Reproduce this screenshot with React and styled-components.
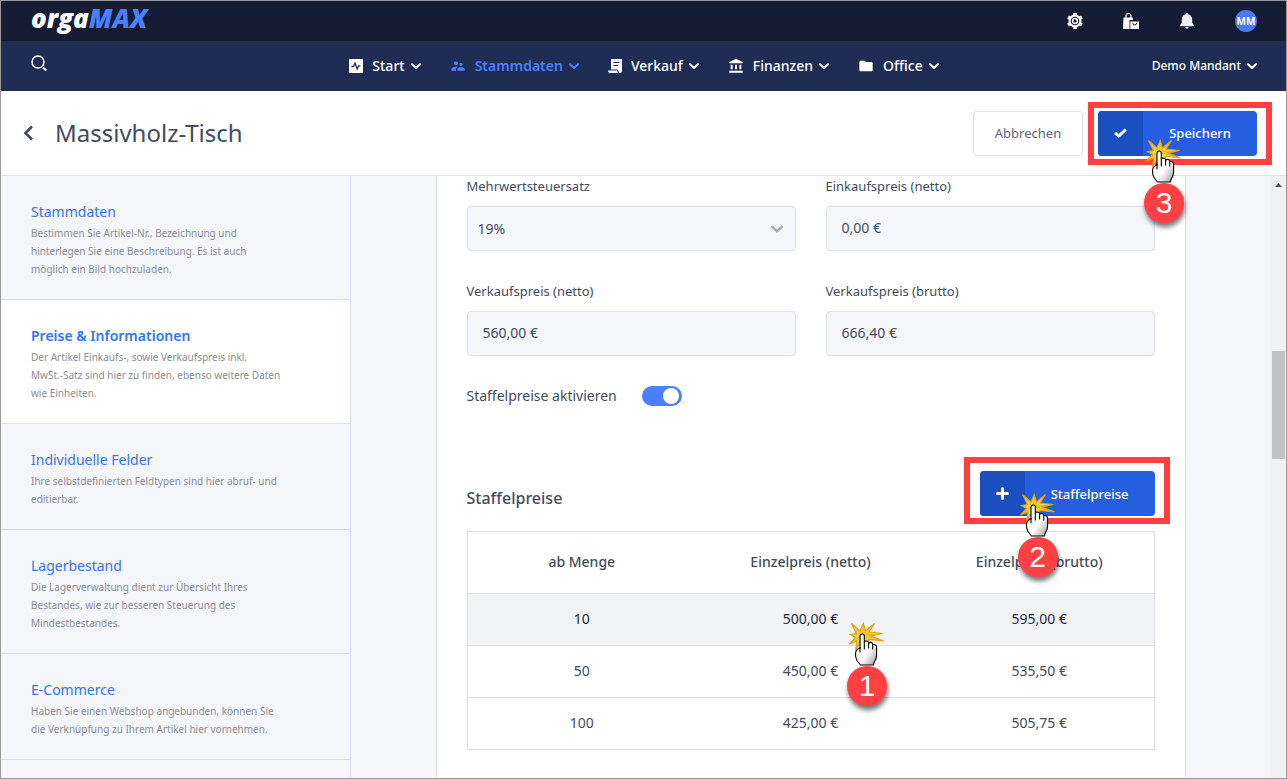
import React from "react";
import styled, { createGlobalStyle, css } from "styled-components";
import { MdAccountBalance, MdFolder, MdSupervisorAccount } from "react-icons/md";

const color = {
  top: "#151d35",
  nav: "#1f2d54",
  surface: "#f5f6fa",
  line: "#dcdfea",
  text: "#434c5e",
  muted: "#8a8d93",
  link: "#3573f0",
  accent: "#4a80ff",
  primary: "#265ee0",
  primaryDark: "#1b4fc0",
  mark: "#ff4043",
};

const GlobalStyle = createGlobalStyle`
  *, *::before, *::after { box-sizing: border-box; }
  body {
    margin: 0;
    font-family: "Noto Sans", "Open Sans", sans-serif;
    font-size: 14px;
    line-height: 20px;
    color: ${color.text};
  }
  button, input, select { font: inherit; color: inherit; margin: 0; }
  a { color: inherit; text-decoration: none; }
  svg { display: block; flex: none; }
`;

const Page = styled.div`
  display: flex;
  flex-direction: column;
  height: 100vh;
  border: 1px solid #999;
  overflow: hidden;
  background: #fff;
`;

const TopBar = styled.div`
  flex: none;
  display: flex;
  align-items: center;
  justify-content: space-between;
  height: 40px;
  padding: 0 29px 0 30px;
  background: ${color.top};
  color: #fff;
`;

const Logo = styled.a`
  padding-bottom: 6px;
  font-family: "Open Sans", sans-serif;
  font-size: 26px;
  font-weight: 800;
  font-style: italic;
  line-height: 34px;
  b {
    font-weight: 800;
    color: ${color.accent};
  }
`;

const TopActions = styled.div`
  display: flex;
  align-items: center;
  gap: 40px;
`;

const IconButton = styled.button`
  display: flex;
  padding: 0;
  border: 0;
  background: none;
  color: inherit;
`;

const Avatar = styled.button`
  width: 22px;
  height: 22px;
  padding: 0;
  border: 0;
  border-radius: 50%;
  background: #4a7bf5;
  color: #fff;
  font-size: 10px;
  font-weight: 700;
  line-height: 22px;
`;

const NavBar = styled.nav`
  flex: none;
  display: grid;
  grid-template-columns: 1fr auto 1fr;
  align-items: center;
  height: 50px;
  padding: 0 29px 0 30px;
  background: ${color.nav};
  color: #fff;
`;

const SearchButton = styled(IconButton)`
  padding-bottom: 6px;
`;

const NavList = styled.div`
  display: flex;
  gap: 29px;
`;

const NavLink = styled.a`
  display: flex;
  align-items: center;
  gap: 6px;
  font-weight: ${(p) => (p.$active ? 600 : 500)};
  color: ${(p) => (p.$active ? color.accent : "#fff")};
  > svg:first-child {
    margin-right: 3px;
  }
`;

const ClientMenu = styled.button`
  justify-self: end;
  display: flex;
  align-items: center;
  gap: 6px;
  padding: 0;
  border: 0;
  background: none;
  color: #fff;
  font-size: 12px;
  font-weight: 500;
`;

const PageHeader = styled.header`
  flex: none;
  position: relative;
  z-index: 2;
  display: flex;
  align-items: center;
  height: 85px;
  padding: 0 29px 0 21px;
  border-bottom: 1px solid ${color.line};
  background: #fff;
`;

const Title = styled.h1`
  flex: 1;
  margin: 0 0 0 21px;
  font-size: 24px;
  font-weight: 400;
  line-height: 32px;
`;

const ButtonRow = styled.div`
  display: flex;
  gap: 15px;
`;

const PlainButton = styled.button`
  height: 45px;
  padding: 0 21px;
  border: 1px solid ${color.line};
  border-radius: 4px;
  background: #fff;
  font-size: 13px;
  color: #5c6474;
`;

const PrimaryButton = styled.button`
  display: flex;
  align-items: center;
  height: 45px;
  padding: 0;
  border: 0;
  border-radius: 4px;
  overflow: hidden;
  background: ${color.primary};
  color: #fff;
  font-size: 13px;
  font-weight: 500;
`;

const ButtonIcon = styled.span`
  display: grid;
  place-items: center;
  width: 45px;
  height: 45px;
  background: ${color.primaryDark};
`;

const ButtonText = styled.span`
  padding: 0 26px;
`;

const Highlighted = styled.div`
  position: relative;
  &::after {
    content: "";
    position: absolute;
    inset: ${(p) => p.$inset};
    border: 6px solid ${color.mark};
    pointer-events: none;
  }
`;

const Body = styled.div`
  flex: 1;
  min-height: 0;
  display: flex;
  background: ${color.surface};
`;

const Sidebar = styled.aside`
  flex: none;
  width: 350px;
  border-right: 1px solid ${color.line};
  overflow: hidden;
`;

const SideItem = styled.a`
  display: block;
  padding: 26px 60px 21px 30px;
  border-bottom: 1px solid ${color.line};
  ${(p) =>
    p.$active &&
    css`
      background: #fff;
    `}
`;

const SideTitle = styled.span`
  display: block;
  margin-bottom: 2px;
  font-weight: ${(p) => (p.$active ? 600 : 400)};
  color: ${color.link};
`;

const SideText = styled.span`
  display: block;
  font-size: 10px;
  line-height: 18px;
  color: ${color.muted};
`;

const Content = styled.main`
  flex: 1;
  min-width: 0;
  display: flex;
  justify-content: center;
  overflow: hidden;
`;

const Panel = styled.section`
  width: 100%;
  max-width: 750px;
  min-height: 100%;
  padding: 0 30px 30px;
  border: solid ${color.line};
  border-width: 0 1px;
  background: #fff;
`;

const FieldGrid = styled.div`
  display: grid;
  grid-template-columns: 1fr 1fr;
  gap: 30px;
`;

const Field = styled.div`
  display: flex;
  flex-direction: column;
  gap: 10px;
`;

const FieldLabel = styled.label`
  font-size: ${(p) => (p.$large ? 14 : 13)}px;
`;

const control = css`
  width: 100%;
  height: 45px;
  border: 1px solid ${color.line};
  border-radius: 4px;
  background: ${color.surface};
`;

const TextInput = styled.input`
  ${control}
  padding: 0 15px 2px;
`;

const SelectBox = styled.div`
  display: grid;
  align-items: center;
  > * {
    grid-area: 1 / 1;
  }
  svg {
    justify-self: end;
    margin-right: 13px;
    color: #aaa;
    pointer-events: none;
  }
`;

const Select = styled.select`
  ${control}
  appearance: none;
  padding: 0 10px;
`;

const ToggleRow = styled.div`
  display: flex;
  align-items: center;
  gap: 25px;
  margin-top: 30px;
`;

const Toggle = styled.input`
  appearance: none;
  display: flex;
  align-items: center;
  width: 40px;
  height: 20px;
  padding: 0 3px;
  border-radius: 10px;
  background: #c4c8d4;
  &:checked {
    justify-content: flex-end;
    background: ${color.accent};
  }
  &::before {
    content: "";
    width: 16px;
    height: 16px;
    border-radius: 50%;
    background: #fff;
  }
`;

const SectionHead = styled.div`
  display: flex;
  justify-content: space-between;
  align-items: center;
  margin: 65px 0 15px;
`;

const SectionTitle = styled.h2`
  margin: 0;
  padding-top: 8px;
  font-size: 16px;
  font-weight: 500;
`;

const PriceTable = styled.table`
  width: 100%;
  table-layout: fixed;
  border-collapse: collapse;
  border: 1px solid ${color.line};
  text-align: center;
`;

const HeadCell = styled.th`
  height: 62px;
  padding: 0 0 2px;
  font-weight: 500;
`;

const Row = styled.tr`
  height: 52px;
  border-top: 1px solid ${color.line};
  ${(p) =>
    p.$hover &&
    css`
      background: #f1f3f5;
      color: #1f2745;
    `}
`;

const Cell = styled.td`
  position: relative;
  padding: 0 0 2px;
`;

const ScrollTrack = styled.div`
  flex: none;
  display: flex;
  flex-direction: column;
  align-items: center;
  width: 16px;
  padding-top: 7px;
  background: #f1f1f1;
`;

const ScrollThumb = styled.div`
  width: 13px;
  height: 108px;
  margin-top: 164px;
  background: #c1c1c1;
`;

const Marker = styled.span`
  position: absolute;
  z-index: 3;
  left: ${(p) => p.$left}px;
  top: ${(p) => p.$top}px;
  display: flex;
  flex-direction: column;
  align-items: center;
  width: 40px;
  pointer-events: none;
`;

const MarkerBadge = styled.span`
  width: 40px;
  height: 40px;
  border-radius: 50%;
  background: ${color.mark};
  box-shadow: 1px 4px 5px rgba(0, 0, 0, 0.55);
  color: #fff;
  font: 400 30px/40px "Liberation Sans", Arial, sans-serif;
  text-align: center;
`;

function Chevron({ size = 10, width = 2 }) {
  return (
    <svg width={size} height={size} viewBox="0 0 10 10" fill="none" stroke="currentColor" strokeWidth={width} strokeLinecap="round" strokeLinejoin="round">
      <path d="M1 3.2 5 7l4-3.800" />
    </svg>
  );
}

function ClickMarker({ number, left, top }) {
  return (
    <Marker $left={left} $top={top}>
      <svg width="40" height="45" viewBox="-20 -14 40 45" overflow="visible">
        <defs>
          <linearGradient id={`hand-${number}`} x1="0.3" y1="0.3" x2="1" y2="1">
            <stop offset="0.4" stopColor="#fff" />
            <stop offset="1" stopColor="#999" />
          </linearGradient>
        </defs>
        <g transform="translate(-5 0)">
          <path
            d="M-10.500-11.500-2-4 1.300-11.500 3.500-4 12.500-11.500 7-3 20.500-1.500 9 1 21.500 6 7 4.500 4 8-1 6-6.500 15.500-5 6-12.500 9-6.500 2.500-11.500-.500-5.500-1.500Z"
            fill="#f5cf45"
            stroke="#dfa20c"
            strokeWidth="1.200"
          />
          <path d="M-7-8 0 0 1.500-8M0 0 9-8M0 0 16-.500M0 0 17 5M0 0-9 6.500" fill="none" stroke="#e6ad17" strokeWidth=".8" />
          <path
            d="M-2 1.500Q-2-1 .2-1T2.300 1.500V7Q3 5.500 5 6.200T7 8Q9 6.500 10.500 8.500L10.700 9.500Q14.800 9 14.600 13V20Q14.600 24 12.500 26.500L11.300 30H-1.500L-5 25.500Q-6.800 22-6.500 18.500-6.200 14.500-2 13Z"
            fill={`url(#hand-${number})`}
            stroke="#000"
            strokeWidth="1.100"
            strokeLinejoin="round"
          />
          <path d="M-2 12V17.500M2.300 7V14.500M6.600 8V13.500M10.700 9.500V14.500" fill="none" stroke="#000" strokeWidth="1.100" />
        </g>
      </svg>
      <MarkerBadge>{number}</MarkerBadge>
    </Marker>
  );
}

function StartIcon() {
  return (
    <svg width="14" height="14" viewBox="0 0 14 14">
      <rect width="14" height="14" rx="1" fill="currentColor" />
      <path d="M2.500 7.500H4.500L6 4 8.200 10 9.500 6.800H11.500" fill="none" stroke={color.nav} strokeWidth="1.300" />
    </svg>
  );
}

function ReceiptIcon() {
  return (
    <svg width="14" height="14" viewBox="0 0 14 14">
      <path d="M3 0H14V11.500Q14 14 11.500 14L9.500 10.500H3Z" fill="currentColor" />
      <path d="M0 11.500H9L10 14H2Q0 14 0 11.500Z" fill="currentColor" />
      <path d="M5.500 3.500H11.500M5.500 6.500H10" stroke={color.nav} strokeWidth="1.200" />
    </svg>
  );
}

function GearIcon() {
  return (
    <svg width="16" height="16" viewBox="0 0 16 16" fill="none" stroke="#fff">
      <circle cx="8" cy="8" r="5.400" strokeWidth="2.200" />
      <path
        d="M8 2.500V0M8 13.500V16M3.240 5.250 1.070 4M12.760 10.750 14.930 12M3.240 10.750 1.070 12M12.760 5.250 14.930 4"
        strokeWidth="3.600"
      />
      <circle cx="8" cy="8" r="2.400" strokeWidth="1.500" />
    </svg>
  );
}

function BagIcon() {
  return (
    <svg width="16" height="16" viewBox="0 0 16 16">
      <path d="M3 5V3a2.500 2.500 0 0 1 5 0v2" fill="none" stroke="currentColor" strokeWidth="1.200" />
      <path d="M.5 4.500H9.500L10 7H6.500V16H0Z" fill="currentColor" />
      <path d="M7.300 8.500H16V16H7.300Z" fill="currentColor" />
      <path d="M9.800 10a1.900 1.900 0 0 0 3.800 0" fill="none" stroke={color.top} strokeWidth="1" />
    </svg>
  );
}

function BellIcon() {
  return (
    <svg width="16" height="16" viewBox="0 0 16 16" fill="#eef0f6">
      <path d="M8 0c.8 0 1.200.5 1.200 1.300C11.700 1.900 13.200 3.800 13.200 6.300V10l1.800 2v1.200H1V12l1.800-2V6.300c0-2.500 1.500-4.400 4-5C6.800.5 7.200 0 8 0ZM6.300 14h3.400a1.700 1.700 0 0 1-3.400 0Z" />
    </svg>
  );
}

function SearchIcon() {
  return (
    <svg width="16" height="16" viewBox="0 0 16 16" fill="none" stroke="#fff" strokeWidth="1.500">
      <circle cx="7" cy="7" r="6" />
      <path d="m12 12.500 3.300 3" strokeWidth="2" />
    </svg>
  );
}

const navItems = [
  { label: "Start", icon: <StartIcon /> },
  { label: "Stammdaten", icon: <MdSupervisorAccount size={16} />, active: true },
  { label: "Verkauf", icon: <ReceiptIcon /> },
  { label: "Finanzen", icon: <MdAccountBalance size={16} /> },
  { label: "Office", icon: <MdFolder size={16} /> },
];

const sections = [
  {
    title: "Stammdaten",
    lines: ["Bestimmen Sie Artikel-Nr., Bezeichnung und", "hinterlegen Sie eine Beschreibung. Es ist auch", "möglich ein Bild hochzuladen."],
  },
  {
    title: "Preise & Informationen",
    active: true,
    lines: ["Der Artikel Einkaufs-, sowie Verkaufspreis inkl.", "MwSt.-Satz sind hier zu finden, ebenso weitere Daten", "wie Einheiten."],
  },
  { title: "Individuelle Felder", lines: ["Ihre selbstdefinierten Feldtypen sind hier abruf- und", "editierbar."] },
  {
    title: "Lagerbestand",
    lines: ["Die Lagerverwaltung dient zur Übersicht Ihres", "Bestandes, wie zur besseren Steuerung des", "Mindestbestandes."],
  },
  { title: "E-Commerce", lines: ["Haben Sie einen Webshop angebunden, können Sie", "die Verknüpfung zu Ihrem Artikel hier vornehmen."] },
];

const prices = [
  ["10", "500,00 €", "595,00 €"],
  ["50", "450,00 €", "535,50 €"],
  ["100", "425,00 €", "505,75 €"],
];

function PriceField({ id, label, value }) {
  return (
    <Field>
      <FieldLabel htmlFor={id}>{label}</FieldLabel>
      <TextInput id={id} defaultValue={value} />
    </Field>
  );
}

export default function App() {
  return (
    <Page>
      <GlobalStyle />
      <TopBar>
        <Logo href="#">
          orga<b>MAX</b>
        </Logo>
        <TopActions>
          <IconButton aria-label="Einstellungen">
            <GearIcon />
          </IconButton>
          <IconButton aria-label="Shop">
            <BagIcon />
          </IconButton>
          <IconButton aria-label="Benachrichtigungen">
            <BellIcon />
          </IconButton>
          <Avatar>MM</Avatar>
        </TopActions>
      </TopBar>
      <NavBar>
        <SearchButton aria-label="Suche">
          <SearchIcon />
        </SearchButton>
        <NavList>
          {navItems.map((item) => (
            <NavLink key={item.label} href="#" $active={item.active}>
              {item.icon}
              {item.label}
              <Chevron />
            </NavLink>
          ))}
        </NavList>
        <ClientMenu>
          Demo Mandant
          <Chevron />
        </ClientMenu>
      </NavBar>
      <PageHeader>
        <IconButton aria-label="Zurück">
          <svg width="12" height="16" viewBox="0 0 12 16" fill="none" stroke={color.text} strokeWidth="2.600">
            <path d="M10 1.500 3.500 8l6.500 6.500" />
          </svg>
        </IconButton>
        <Title>Massivholz-Tisch</Title>
        <ButtonRow>
          <PlainButton>Abbrechen</PlainButton>
          <Highlighted $inset="-9px -15px -9px -10px">
            <PrimaryButton>
              <ButtonIcon>
                <svg width="13" height="10" viewBox="0 0 13 10" fill="none" stroke="#fff" strokeWidth="3">
                  <path d="m1.200 4.800 3.600 3.200L11.800 1.500" />
                </svg>
              </ButtonIcon>
              <ButtonText>Speichern</ButtonText>
            </PrimaryButton>
            <ClickMarker number={3} left={46} top={27} />
          </Highlighted>
        </ButtonRow>
      </PageHeader>
      <Body>
        <Sidebar>
          {sections.map((s) => (
            <SideItem key={s.title} href="#" $active={s.active}>
              <SideTitle $active={s.active}>{s.title}</SideTitle>
              {s.lines.map((line) => (
                <SideText key={line}>{line}</SideText>
              ))}
            </SideItem>
          ))}
        </Sidebar>
        <Content>
          <Panel>
            <FieldGrid>
              <Field>
                <FieldLabel htmlFor="vat">Mehrwertsteuersatz</FieldLabel>
                <SelectBox>
                  <Select id="vat" defaultValue="19%">
                    <option>19%</option>
                  </Select>
                  <Chevron size={12} />
                </SelectBox>
              </Field>
              <PriceField id="buy" label="Einkaufspreis (netto)" value="0,00 €" />
              <PriceField id="sell-net" label="Verkaufspreis (netto)" value="560,00 €" />
              <PriceField id="sell-gross" label="Verkaufspreis (brutto)" value="666,40 €" />
            </FieldGrid>
            <ToggleRow>
              <FieldLabel htmlFor="scale" $large>
                Staffelpreise aktivieren
              </FieldLabel>
              <Toggle id="scale" type="checkbox" defaultChecked />
            </ToggleRow>
            <SectionHead>
              <SectionTitle>Staffelpreise</SectionTitle>
              <Highlighted $inset="-14px -15px -8px -16px">
                <PrimaryButton>
                  <ButtonIcon>
                    <svg width="13" height="13" viewBox="0 0 13 13" stroke="#fff" strokeWidth="3" strokeLinecap="round">
                      <path d="M6.500 1.500v10M1.500 6.500h10" />
                    </svg>
                  </ButtonIcon>
                  <ButtonText>Staffelpreise</ButtonText>
                </PrimaryButton>
                <ClickMarker number={2} left={38} top={21} />
              </Highlighted>
            </SectionHead>
            <PriceTable>
              <thead>
                <tr>
                  <HeadCell>ab Menge</HeadCell>
                  <HeadCell>Einzelpreis (netto)</HeadCell>
                  <HeadCell>Einzelpreis (brutto)</HeadCell>
                </tr>
              </thead>
              <tbody>
                {prices.map(([amount, net, gross], i) => (
                  <Row key={amount} $hover={i === 0}>
                    <Cell>{amount}</Cell>
                    <Cell>
                      {net}
                      {i === 0 && <ClickMarker number={1} left={151} top={27} />}
                    </Cell>
                    <Cell>{gross}</Cell>
                  </Row>
                ))}
              </tbody>
            </PriceTable>
          </Panel>
        </Content>
        <ScrollTrack>
          <svg width="7" height="4" viewBox="0 0 7 4" fill="#505050">
            <path d="M3.500 0 7 4H0Z" />
          </svg>
          <ScrollThumb />
        </ScrollTrack>
      </Body>
    </Page>
  );
}
